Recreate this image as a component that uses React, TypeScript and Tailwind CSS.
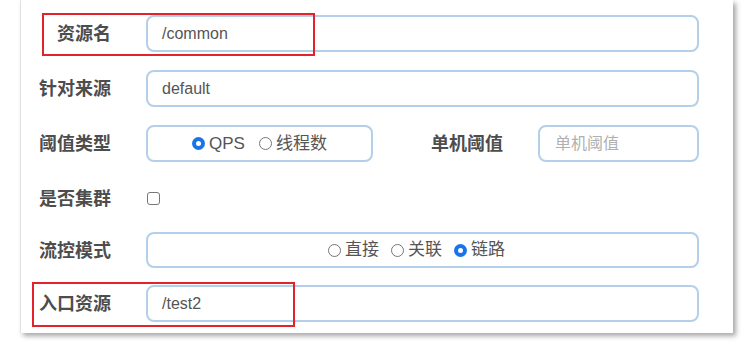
function Radio({ checked, label }: { checked?: boolean; label: string }) {
  return (
    <span className="flex items-center gap-[4px]">
      {checked ? (
        <span className="w-[13px] h-[13px] rounded-full bg-[#1a73e8] flex items-center justify-center">
          <span className="w-[5px] h-[5px] rounded-full bg-white"></span>
        </span>
      ) : (
        <span className="w-[13px] h-[13px] rounded-full border border-[#767676] bg-white"></span>
      )}
      <span>{label}</span>
    </span>
  );
}

function Label({ text }: { text: string }) {
  return (
    <div className="w-[90px] text-right text-[18px] font-bold text-[#4d4d4d] shrink-0 whitespace-nowrap pt-[2px]">{text}</div>
  );
}

export default function App() {
  const inputCls =
    "h-[37px] rounded-lg border-2 border-[#b3cfea] flex items-center pl-[14px] text-[16px] text-[#555] bg-white";

  return (
    <div
      className="relative w-[754px] h-[346px] bg-white overflow-hidden"
      style={{ fontFamily: '"Liberation Sans", "Noto Sans CJK SC", sans-serif' }}
    >
      <div className="ml-[20px] w-[713px] h-[333px] bg-white border-l border-[#e2e2e2] shadow-[3px_3px_5px_rgba(0,0,0,0.35)] pr-[34px] pt-[15px] flex flex-col">
        <div className="flex items-center gap-[35px]">
          <Label text="资源名" />
          <div className={inputCls + " flex-1"}>/common</div>
        </div>

        <div className="flex items-center gap-[35px] mt-[18px]">
          <Label text="针对来源" />
          <div className={inputCls + " flex-1"}>default</div>
        </div>

        <div className="flex items-center gap-[35px] mt-[18px]">
          <Label text="阈值类型" />
          <div className="w-[227px] h-[37px] rounded-lg border-2 border-[#b3cfea] flex items-center justify-center gap-[14px] text-[17px] text-[#555]">
            <Radio checked label="QPS" />
            <Radio label="线程数" />
          </div>
          <div className="ml-[23px] w-[72px] text-[18px] font-bold text-[#4d4d4d] shrink-0 whitespace-nowrap pt-[2px]">单机阈值</div>
          <div className={inputCls + " flex-1 text-[#b0b0b0] pl-[15px]"}>单机阈值</div>
        </div>

        <div className="flex items-center gap-[35px] mt-[18px] h-[37px]">
          <Label text="是否集群" />
          <span className="w-[13px] h-[13px] rounded-[3px] border border-[#767676] ml-[1px]"></span>
        </div>

        <div className="flex items-center gap-[35px] mt-[15px]">
          <Label text="流控模式" />
          <div className="flex-1 h-[36px] rounded-lg border-2 border-[#b3cfea] flex items-center justify-center gap-[12px] text-[17px] text-[#555] pr-[12px]">
            <Radio label="直接" />
            <Radio label="关联" />
            <Radio checked label="链路" />
          </div>
        </div>

        <div className="flex items-center gap-[35px] mt-[17px]">
          <Label text="入口资源" />
          <div className={inputCls + " flex-1 h-[36px]"}>/test2</div>
        </div>
      </div>

      <div className="absolute left-[42px] top-[13px] w-[273px] h-[43px] border-2 border-[#e3222b]"></div>
      <div className="absolute left-[32px] top-[282px] w-[263px] h-[45px] border-2 border-[#e3222b]"></div>
    </div>
  );
}
